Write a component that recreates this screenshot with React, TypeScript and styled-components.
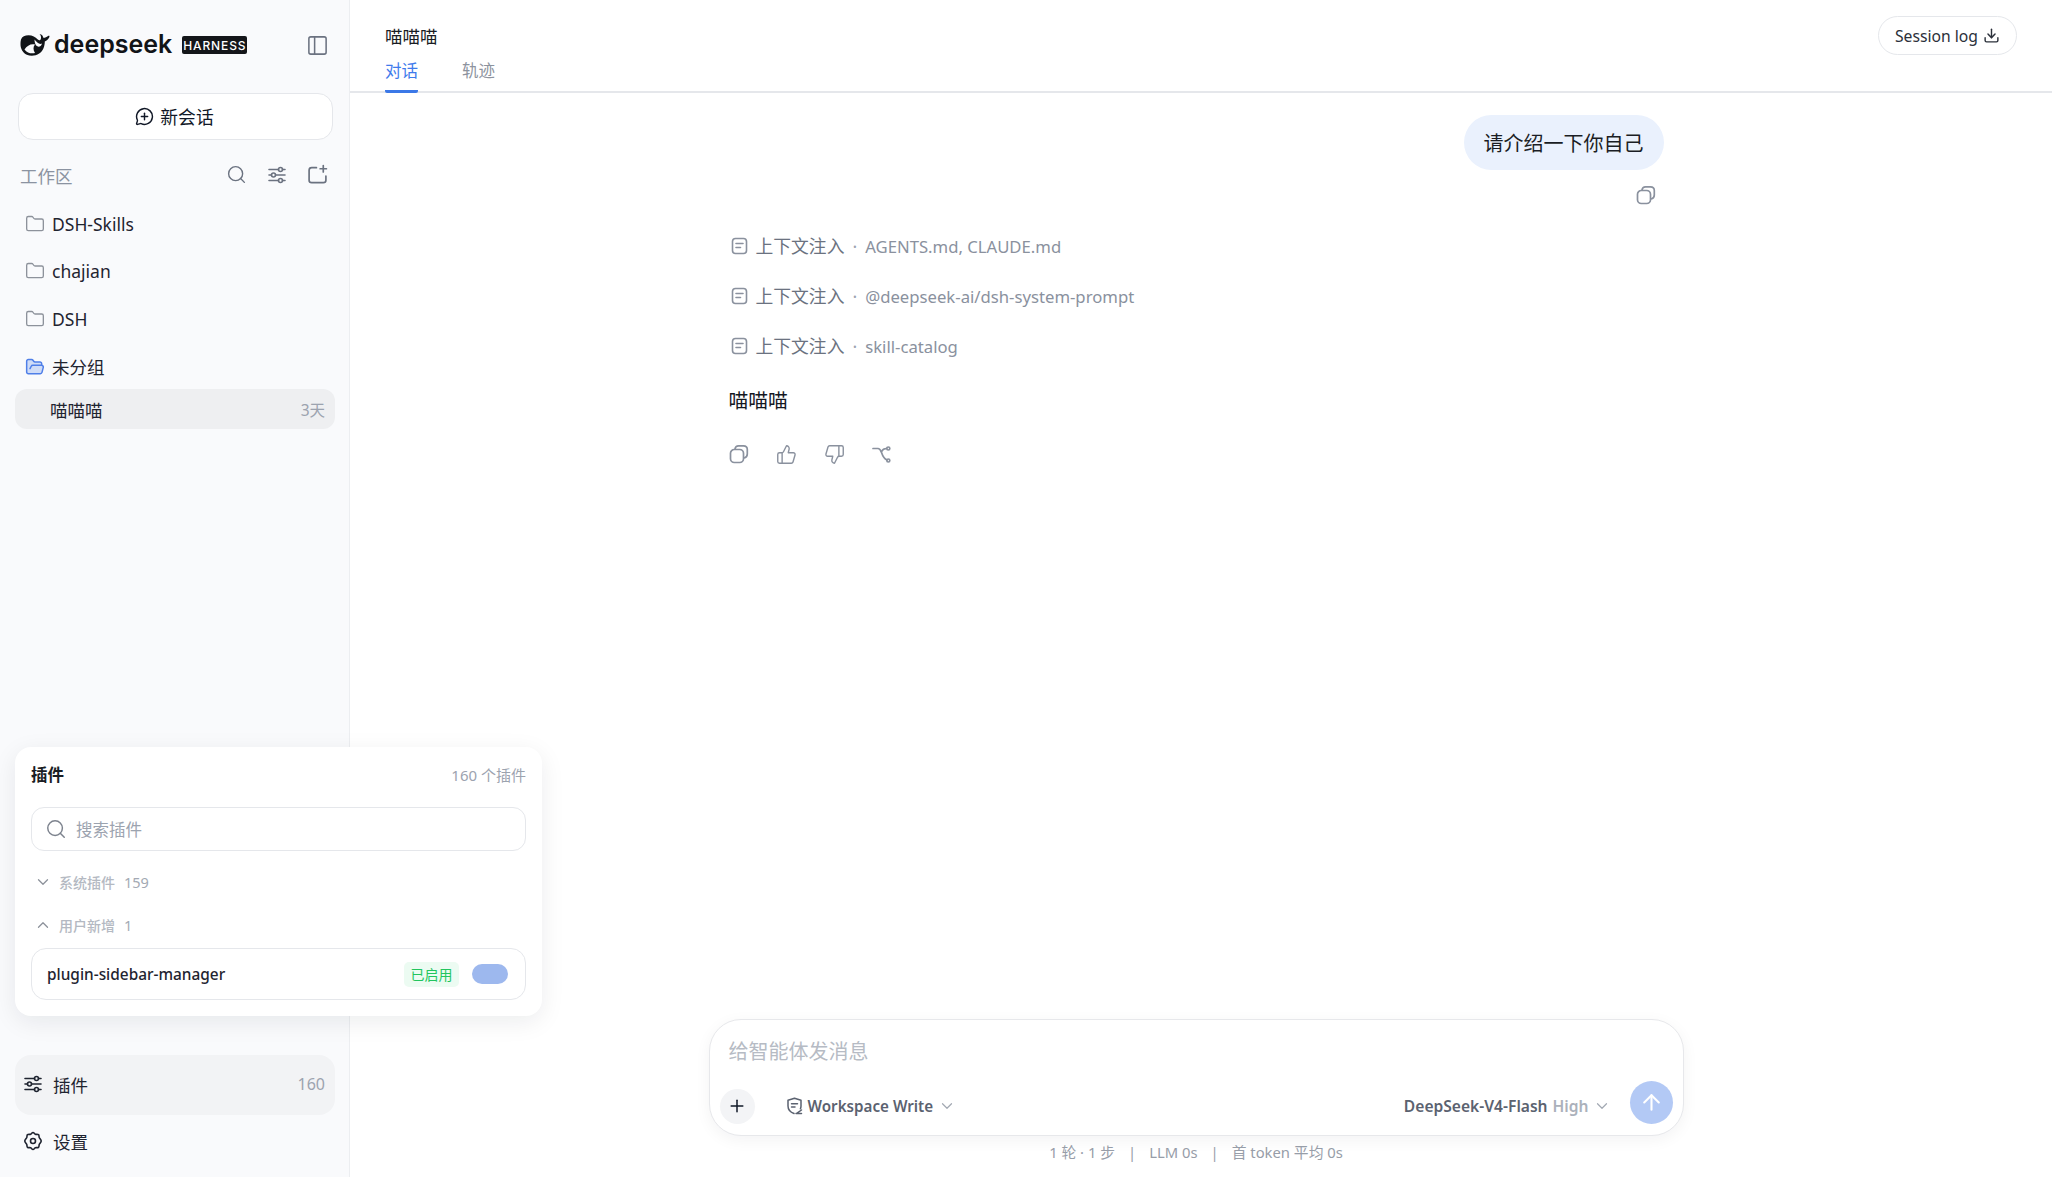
import { createGlobalStyle } from "styled-components";
import styled from "styled-components";
import {
  ArrowUp,
  ChevronDown,
  ChevronUp,
  Download,
  Folder,
  FolderOpen,
  MessageCirclePlus,
  PanelLeft,
  Plus,
  Search,
  ThumbsDown,
  ThumbsUp,
} from "lucide-react";

const FONT = `"Noto Sans", "Noto Sans CJK SC", sans-serif`;

const GlobalStyle = createGlobalStyle`
  * { box-sizing: border-box; }
  html, body { margin: 0; height: 100%; }
  body {
    font-family: ${FONT};
    color: #111827;
    background: #fff;
    overflow: hidden;
  }
  #root { height: 100%; }
`;

const Page = styled.div`
  display: flex;
  height: 1177px;
  width: 2052px;
`;

const Sidebar = styled.aside`
  position: relative;
  width: 350px;
  flex: none;
  display: flex;
  flex-direction: column;
  background: #f9fafc;
  border-right: 1px solid #eceef1;
  padding: 0 14px 0 15px;
`;

const BrandRow = styled.div`
  height: 90px;
  display: flex;
  align-items: center;
  padding-left: 5px;
  color: #111418;
`;

const BrandName = styled.span`
  font-family: "Inter", sans-serif;
  font-size: 25px;
  font-weight: 600;
  line-height: 1;
  margin-left: 4px;
  position: relative;
  top: -1px;
`;

const BrandTag = styled.span`
  margin-left: 10px;
  width: 65px;
  height: 18px;
  background: #14161a;
  color: #fff;
  border-radius: 2px;
  display: flex;
  align-items: center;
  justify-content: center;
  font-family: "Inter", sans-serif;
  font-size: 12px;
  font-weight: 500;
  letter-spacing: 0.9px;
`;

const IconBtn = styled.span<{ $color?: string }>`
  display: inline-flex;
  align-items: center;
  justify-content: center;
  color: ${(p) => p.$color || "#6b7280"};
`;

const PanelBtn = styled(IconBtn)`
  margin-left: auto;
  margin-right: 6px;
`;

const NewChat = styled.button`
  margin: 3px 2px 0 3px;
  height: 47px;
  background: #fff;
  border: 1px solid #e5e7eb;
  border-radius: 15px;
  display: flex;
  align-items: center;
  justify-content: center;
  gap: 6px;
  font-family: ${FONT};
  font-size: 17.8px;
  color: #111827;
  padding: 0 2px 1px 0;
`;

const SectionHead = styled.div`
  height: 37px;
  margin-top: 17px;
  display: flex;
  align-items: center;
  padding: 0 5px;
  color: #8b93a1;
  font-size: 17.5px;
`;

const SectionIcons = styled.div`
  margin-left: auto;
  display: flex;
  align-items: center;
  gap: 20px;
  margin: -2px 2px 0 auto;
`;

const FolderList = styled.div`
  margin-top: 6px;
  display: flex;
  flex-direction: column;
`;

const FolderRow = styled.div`
  height: 47.6px;
  display: flex;
  align-items: center;
  gap: 7px;
  padding-left: 10px;
  font-size: 17.5px;
  color: #1f2430;
`;

const Thread = styled.div`
  height: 40px;
  margin: -1px 0 0;
  background: #eeeff1;
  border-radius: 12px;
  display: flex;
  align-items: center;
  justify-content: space-between;
  padding: 0 10px 0 35px;
  font-size: 17.5px;
  color: #1f2430;
`;

const Muted = styled.span`
  color: #9ca3af;
  font-size: 15.5px;
`;

const SideFoot = styled.div`
  margin-top: auto;
  display: flex;
  flex-direction: column;
  padding-bottom: 8px;
`;

const FootRow = styled.div<{ $active?: boolean }>`
  height: ${(p) => (p.$active ? "60px" : "54px")};
  display: flex;
  align-items: center;
  gap: 10px;
  padding: 0 10px 2px 8px;
  border-radius: 16px;
  font-size: 17.5px;
  color: #1f2430;
  background: ${(p) => (p.$active ? "#f2f3f5" : "transparent")};
`;

const FootCount = styled(Muted)`
  margin-left: auto;
  font-size: 16px;
`;

const Popover = styled.div`
  position: absolute;
  left: 15px;
  top: 747px;
  width: 527px;
  height: 269px;
  z-index: 5;
  background: #fff;
  border-radius: 16px;
  box-shadow: 0 6px 24px rgba(17, 24, 39, 0.08);
  padding: 13px 16px 0;
  display: flex;
  flex-direction: column;
`;

const PopHead = styled.div`
  display: flex;
  align-items: center;
  justify-content: space-between;
  height: 28px;
`;

const PopTitle = styled.span`
  font-size: 16.5px;
  font-weight: 700;
  color: #1a1d24;
`;

const PopCount = styled.span`
  font-size: 15px;
  color: #9ca3af;
`;

const SearchBox = styled.div`
  margin-top: 19px;
  height: 44px;
  flex: none;
  border: 1px solid #e5e7eb;
  border-radius: 13px;
  display: flex;
  align-items: center;
  gap: 9px;
  padding-left: 13px;
  font-size: 16.5px;
  color: #9ca3af;
`;

const GroupRow = styled.div`
  height: 43px;
  display: flex;
  align-items: center;
  gap: 7px;
  padding-left: 3px;
  color: #b4b9c2;
  font-size: 14px;
  font-weight: 500;
`;

const GroupFirst = styled(GroupRow)`
  margin-top: 9px;
`;

const GroupCount = styled.span`
  font-size: 14.5px;
  font-weight: 400;
  color: #a3a9b3;
  margin-left: 2px;
`;

const PluginCard = styled.div`
  margin-top: 2px;
  height: 52px;
  flex: none;
  border: 1px solid #e5e7eb;
  border-radius: 15px;
  display: flex;
  align-items: center;
  padding: 0 17px 0 15px;
`;

const PluginName = styled.span`
  font-size: 15.4px;
  font-weight: 500;
  color: #1f2430;
`;

const Enabled = styled.span`
  margin-left: auto;
  width: 55px;
  height: 25px;
  background: #ecfbf2;
  color: #22c55e;
  border-radius: 5px;
  font-size: 14px;
  display: flex;
  align-items: center;
  justify-content: center;
`;

const Toggle = styled.span`
  margin-left: 13px;
  width: 36px;
  height: 20px;
  background: #9db8ee;
  border-radius: 10px;
`;

const Main = styled.main`
  flex: 1;
  min-width: 0;
  display: flex;
  flex-direction: column;
`;

const TopBar = styled.header`
  height: 93px;
  flex: none;
  border-bottom: 2px solid #e5e7eb;
  padding: 0 35px 0 35px;
  display: flex;
  justify-content: space-between;
`;

const TitleCol = styled.div`
  display: flex;
  flex-direction: column;
`;

const Title = styled.div`
  font-size: 17.5px;
  line-height: 24px;
  margin-top: 24px;
  color: #1a1d24;
`;

const Tabs = styled.div`
  display: flex;
  gap: 44px;
  margin-top: 11px;
`;

const Tab = styled.div<{ $active?: boolean }>`
  height: 34px;
  font-size: 16.5px;
  line-height: 24px;
  color: ${(p) => (p.$active ? "#3f7bec" : "#8d939e")};
  border-bottom: 3px solid ${(p) => (p.$active ? "#3b78e7" : "transparent")};
  width: 33px;
  white-space: nowrap;
  border-radius: 0 0 2px 2px;
`;

const SessionLog = styled.button`
  margin-top: 16px;
  width: 139px;
  height: 39px;
  background: #fff;
  border: 1px solid #e5e7eb;
  border-radius: 20px;
  display: flex;
  align-items: center;
  justify-content: center;
  gap: 5px;
  font-family: ${FONT};
  font-size: 15.7px;
  color: #2b303a;
  padding: 0;
`;

const Scroll = styled.div`
  flex: 1;
  min-height: 0;
  width: 935px;
  margin: 0 auto;
  position: relative;
  left: -5px;
  display: flex;
  flex-direction: column;
`;

const Bubble = styled.div`
  align-self: flex-end;
  margin-top: 22px;
  width: 200px;
  height: 55px;
  background: #eaf1fd;
  border-radius: 28px;
  display: flex;
  align-items: center;
  justify-content: center;
  font-size: 20px;
  color: #1a1d24;
`;

const BubbleTools = styled.div`
  align-self: flex-end;
  margin: 15px 8px 0 0;
  height: 20px;
  display: flex;
`;

const ContextList = styled.div`
  margin-top: 16px;
  display: flex;
  flex-direction: column;
`;

const ContextRow = styled.div`
  height: 50px;
  display: flex;
  align-items: center;
  padding-left: 2px;
  font-size: 17.8px;
  color: #6b7280;
`;

const ContextLabel = styled.span`
  margin-left: 8px;
  color: #6b7280;
  position: relative;
  top: -1px;
`;

const Dot = styled.span`
  margin: 0 8px 0 8px;
  color: #9ca3af;
`;

const ContextValue = styled.span`
  color: #8a919e;
  font-size: 16.7px;
`;

const Reply = styled.div`
  margin-top: 14px;
  font-size: 19.8px;
  line-height: 31px;
  color: #14171f;
`;

const ReplyTools = styled.div`
  margin-top: 27px;
  display: flex;
  align-items: center;
  gap: 27px;
  height: 22px;
`;

const Composer = styled.div`
  width: 975px;
  height: 117px;
  flex: none;
  margin: 0 auto;
  position: relative;
  left: -5px;
  background: #fff;
  border: 1px solid #e7e8eb;
  border-radius: 32px;
  box-shadow: 0 4px 16px rgba(17, 24, 39, 0.05);
  display: flex;
  flex-direction: column;
  padding: 18px 10px 0 10px;
`;

const Placeholder = styled.div`
  padding-left: 9px;
  font-size: 20px;
  line-height: 28px;
  color: #b6bbc4;
`;

const ComposerBar = styled.div`
  margin-top: 22px;
  display: flex;
  align-items: center;
  height: 36px;
`;

const AddBtn = styled.span`
  width: 35px;
  height: 35px;
  border-radius: 50%;
  background: #f3f4f6;
  color: #111827;
  display: flex;
  align-items: center;
  justify-content: center;
`;

const Mode = styled.div`
  margin-left: 31px;
  display: flex;
  align-items: center;
  gap: 5px;
  font-size: 15.2px;
  font-weight: 600;
  color: #5b6270;
`;

const ModelBox = styled.div`
  margin-left: auto;
  display: flex;
  align-items: center;
  font-size: 15.6px;
  font-weight: 600;
  color: #5b6270;
`;

const Effort = styled.span`
  color: #abb1bb;
  margin: 0 4px 0 5px;
`;

const SendBtn = styled.span`
  margin: -7px 0 0 19px;
  width: 43px;
  height: 43px;
  border-radius: 50%;
  background: #b3c9f5;
  color: #fff;
  display: flex;
  align-items: center;
  justify-content: center;
`;

const Stats = styled.div`
  height: 41px;
  flex: none;
  position: relative;
  left: -5px;
  display: flex;
  align-items: center;
  justify-content: center;
  gap: 13px;
  font-size: 14.8px;
  color: #979da8;
  padding-bottom: 10px;
`;

function WhaleLogo() {
  return (
    <svg width="30" height="24" viewBox="0 0 30 24" fill="currentColor">
      <path d="M1 6.500C2 3.500 5 2.200 8.500 2.200C12.500 2.200 15.500 4.200 17.500 6.200C19.500 8 20.500 7.500 21 5.200C21.300 3.500 20.500 2 19.500 1C22 1.200 23 3 23.300 4.800C24.800 5 26.500 4.200 28 3C29.500 2.500 29.800 3.200 29.300 4.200C28.500 5.800 26.800 7.800 24.800 8.600C24.800 13 23.300 18 19.200 20.600C15.500 23.200 10.500 23.500 6.800 21.800C2.800 20 .5 15.500 .5 11.500C.5 9.500 .6 8 1 6.500Z" />
      <path d="M4.500 16.500C7 12.500 11 10.500 15 11.500C13 13.500 13 17 15 20C11.500 21 7 20 4.500 16.500Z" fill="#f9fafc" />
      <path d="M14.500 6.500C16.500 9 19.500 12 22 10.500C21 14 18 14.500 16.200 12.500C15 11 14.500 8.500 14.500 6.500Z" fill="#f9fafc" />
    </svg>
  );
}

function FolderAdd() {
  return (
    <svg width="21" height="21" viewBox="0 0 20 20" fill="none" stroke="#6b7280" strokeWidth="1.6" strokeLinecap="round">
      <path d="M9 3.500H4.500C2.900 3.500 2 4.400 2 6V15.500C2 17 2.900 17.800 4.500 17.800H15.500C17 17.800 18 17 18 15.500V11.500" />
      <path d="M15.500 1.500V7.500M12.500 4.500H18.500" />
    </svg>
  );
}

function SliderLines({ size }: { size: number }) {
  return (
    <svg width={size} height={size} viewBox="0 0 20 20" fill="none" stroke="currentColor" strokeWidth="1.6" strokeLinecap="round">
      <path d="M2 4.500H11.500M15.500 4.500H18" />
      <circle cx="13.500" cy="4.500" r="2" />
      <path d="M2 10H4.500M8.500 10H18" />
      <circle cx="6.500" cy="10" r="2" />
      <path d="M2 15.500H11.500M15.500 15.500H18" />
      <circle cx="13.500" cy="15.500" r="2" />
    </svg>
  );
}

function GearIcon() {
  return (
    <svg width="20" height="20" viewBox="0 0 20 20" fill="none" stroke="currentColor" strokeWidth="1.6" strokeLinejoin="round">
      <path d="M10 1.500C11 1.500 11.300 2.800 12.300 3.200C13.400 3.600 14.600 3 15.500 3.700C16.300 4.400 15.800 5.600 16.300 6.700C16.800 7.700 18.200 8.800 18.200 10C18.200 11.200 16.800 12.300 16.300 13.300C15.800 14.400 16.300 15.600 15.500 16.300C14.600 17 13.400 16.400 12.300 16.800C11.300 17.200 11 18.500 10 18.500C9 18.500 8.700 17.200 7.700 16.800C6.600 16.400 5.400 17 4.500 16.300C3.700 15.600 4.200 14.400 3.700 13.300C3.200 12.300 1.800 11.200 1.800 10C1.800 8.800 3.200 7.700 3.700 6.700C4.200 5.600 3.700 4.400 4.500 3.700C5.400 3 6.600 3.600 7.700 3.200C8.700 2.800 9 1.500 10 1.500Z" />
      <circle cx="10" cy="10" r="2.500" />
    </svg>
  );
}

function CopyIcon() {
  return (
    <svg width="20" height="20" viewBox="0 0 20 20" fill="none" stroke="#8a919e" strokeWidth="1.7" strokeLinecap="round">
      <rect x="1.500" y="5.500" width="13" height="13" rx="3.800" />
      <path d="M6 5C6.300 3 7.500 1.800 9.500 1.800H14.500C17 1.800 18.300 3 18.300 5.500V10C18.300 12 17.300 13.500 15 14" />
    </svg>
  );
}

function ContextIcon() {
  return (
    <svg width="17" height="18" viewBox="0 0 17 18" fill="none" stroke="#8a919e" strokeWidth="1.6" strokeLinecap="round">
      <rect x="1.500" y="1.500" width="14" height="15" rx="3" />
      <path d="M5 6.500H12M5 10.500H9.500" />
    </svg>
  );
}

function ModeIcon() {
  return (
    <svg width="17" height="18" viewBox="0 0 17 18" fill="none" stroke="#5b6270" strokeWidth="1.5" strokeLinecap="round" strokeLinejoin="round">
      <path d="M8.500 1.200L15 3.200V9C15 10 14.800 11 14.400 11.800M8.500 1.200L2 3.200V9C2 12.500 4.600 15.300 8 16.500" />
      <path d="M5.500 6.800H11.500M5.500 10H9M10 16.500H15.500M15.500 13L11 16.200" />
    </svg>
  );
}

function RetryIcon() {
  return (
    <svg width="19" height="19" viewBox="0 0 19 19" fill="none" stroke="#8a919e" strokeWidth="1.7" strokeLinecap="round">
      <path d="M1 3.500H6C8 3.500 8.500 5 9.500 7.500C10.500 10.500 11.500 13.500 15 15" />
      <path d="M9.500 6.500C10.500 4.500 12 3.500 14.500 3.500" />
      <circle cx="16.300" cy="3.500" r="1.500" />
      <circle cx="16.300" cy="15.500" r="1.500" />
    </svg>
  );
}

const folders = ["DSH-Skills", "chajian", "DSH"];
const contexts = ["AGENTS.md, CLAUDE.md", "@deepseek-ai/dsh-system-prompt", "skill-catalog"];

export default function App() {
  return (
    <Page>
      <GlobalStyle />
      <Sidebar>
        <BrandRow>
          <WhaleLogo />
          <BrandName>deepseek</BrandName>
          <BrandTag>HARNESS</BrandTag>
          <PanelBtn>
            <PanelLeft size={23} strokeWidth={1.6} />
          </PanelBtn>
        </BrandRow>
        <NewChat>
          <MessageCirclePlus size={19} strokeWidth={1.8} />
          新会话
        </NewChat>
        <SectionHead>
          工作区
          <SectionIcons>
            <IconBtn><Search size={21} strokeWidth={1.6} /></IconBtn>
            <IconBtn><SliderLines size={20} /></IconBtn>
            <IconBtn><FolderAdd /></IconBtn>
          </SectionIcons>
        </SectionHead>
        <FolderList>
          {folders.map((name) => (
            <FolderRow key={name}>
              <IconBtn $color="#8d929b"><Folder size={20} strokeWidth={1.6} /></IconBtn>
              {name}
            </FolderRow>
          ))}
          <FolderRow>
            <IconBtn $color="#4f7fe8"><FolderOpen size={20} strokeWidth={1.8} fill="#cfdcf7" /></IconBtn>
            未分组
          </FolderRow>
          <Thread>
            喵喵喵
            <Muted>3天</Muted>
          </Thread>
        </FolderList>
        <Popover>
          <PopHead>
            <PopTitle>插件</PopTitle>
            <PopCount>160 个插件</PopCount>
          </PopHead>
          <SearchBox>
            <Search size={22} strokeWidth={1.6} color="#7d838e" />
            搜索插件
          </SearchBox>
          <GroupFirst>
            <ChevronDown size={18} strokeWidth={1.7} color="#8d929b" />
            系统插件
            <GroupCount>159</GroupCount>
          </GroupFirst>
          <GroupRow>
            <ChevronUp size={18} strokeWidth={1.7} color="#8d929b" />
            用户新增
            <GroupCount>1</GroupCount>
          </GroupRow>
          <PluginCard>
            <PluginName>plugin-sidebar-manager</PluginName>
            <Enabled>已启用</Enabled>
            <Toggle />
          </PluginCard>
        </Popover>
        <SideFoot>
          <FootRow $active>
            <SliderLines size={20} />
            插件
            <FootCount>160</FootCount>
          </FootRow>
          <FootRow>
            <GearIcon />
            设置
          </FootRow>
        </SideFoot>
      </Sidebar>
      <Main>
        <TopBar>
          <TitleCol>
            <Title>喵喵喵</Title>
            <Tabs>
              <Tab $active>对话</Tab>
              <Tab>轨迹</Tab>
            </Tabs>
          </TitleCol>
          <SessionLog>
            Session log
            <Download size={17} strokeWidth={2} />
          </SessionLog>
        </TopBar>
        <Scroll>
          <Bubble>请介绍一下你自己</Bubble>
          <BubbleTools>
            <CopyIcon />
          </BubbleTools>
          <ContextList>
            {contexts.map((value) => (
              <ContextRow key={value}>
                <ContextIcon />
                <ContextLabel>上下文注入</ContextLabel>
                <Dot>·</Dot>
                <ContextValue>{value}</ContextValue>
              </ContextRow>
            ))}
          </ContextList>
          <Reply>喵喵喵</Reply>
          <ReplyTools>
            <CopyIcon />
            <IconBtn $color="#8a919e"><ThumbsUp size={21} strokeWidth={1.6} /></IconBtn>
            <IconBtn $color="#8a919e"><ThumbsDown size={21} strokeWidth={1.6} /></IconBtn>
            <RetryIcon />
          </ReplyTools>
        </Scroll>
        <Composer>
          <Placeholder>给智能体发消息</Placeholder>
          <ComposerBar>
            <AddBtn><Plus size={20} strokeWidth={1.8} /></AddBtn>
            <Mode>
              <ModeIcon />
              Workspace Write
              <ChevronDown size={18} strokeWidth={1.6} color="#a3a9b3" />
            </Mode>
            <ModelBox>
              DeepSeek-V4-Flash
              <Effort>High</Effort>
              <ChevronDown size={18} strokeWidth={1.6} color="#a3a9b3" />
              <SendBtn><ArrowUp size={25} strokeWidth={2} /></SendBtn>
            </ModelBox>
          </ComposerBar>
        </Composer>
        <Stats>
          <span>1 轮 · 1 步</span>
          <span>|</span>
          <span>LLM 0s</span>
          <span>|</span>
          <span>首 token 平均 0s</span>
        </Stats>
      </Main>
    </Page>
  );
}
